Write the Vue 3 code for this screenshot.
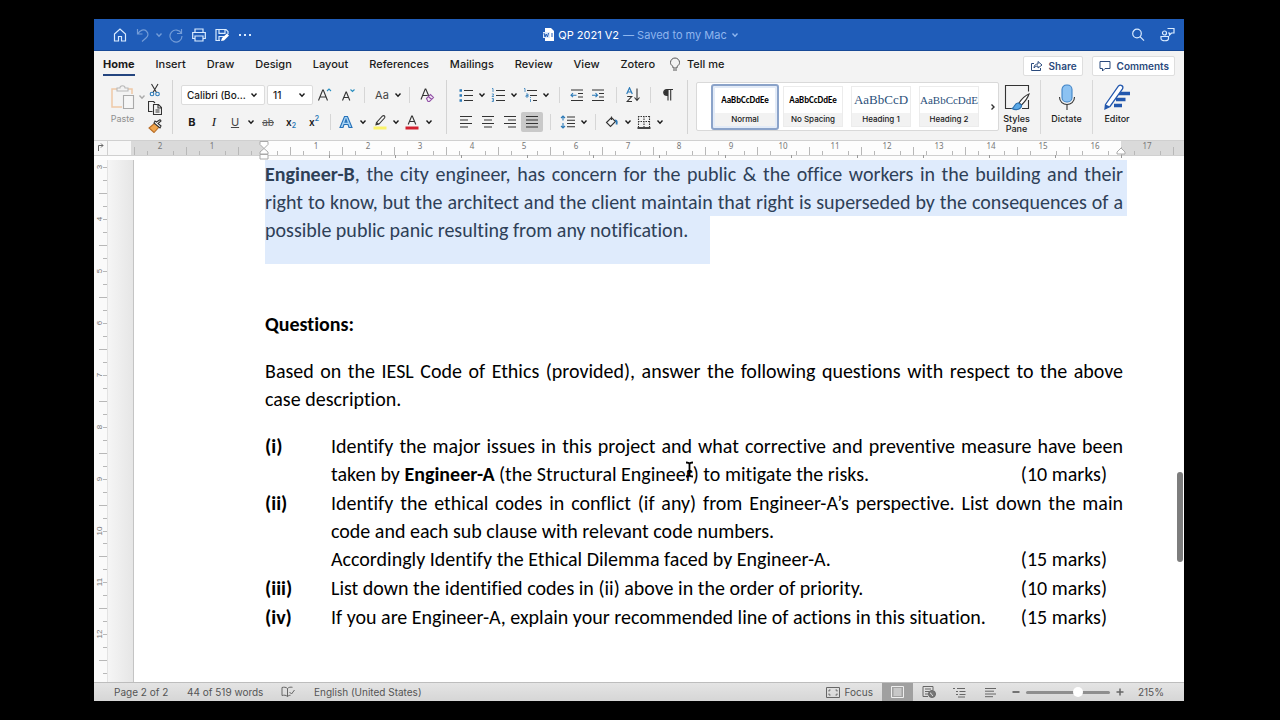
<script setup>
import { ref } from 'vue'

const tabs = ['Home', 'Insert', 'Draw', 'Design', 'Layout', 'References', 'Mailings', 'Review', 'View', 'Zotero']
const fontName = ref('Calibri (Bo...')
const fontSize = ref('11')
const zoom = ref(63)
const styleCards = [
  { name: 'Normal', sample: 'AaBbCcDdEe', kind: 'body', on: true },
  { name: 'No Spacing', sample: 'AaBbCcDdEe', kind: 'body' },
  { name: 'Heading 1', sample: 'AaBbCcD', kind: 'h1' },
  { name: 'Heading 2', sample: 'AaBbCcDdE', kind: 'h2' },
]

/* Ruler geometry: one unit is about 52px, subdivided in quarters. */
const unit = 51.93
const hTicks = []
const hNumbers = []
for (let q = -10; q <= 70; q++) {
  const x = Math.round(170 + (q * unit) / 4)
  if (q % 4 === 0) {
    if (q !== 0 && q / 4 <= 17) hNumbers.push({ x, n: Math.abs(q / 4) })
  } else hTicks.push({ x, top: q % 2 === 0 ? 6 : 10 })
}
const tabStops = Array.from({ length: 13 }, (_, i) => 235 + i * 66)
const vTicks = []
const vNumbers = []
for (let q = 0; q <= 39; q++) {
  const y = Math.round(7 + (q * unit) / 4)
  if (q % 4 === 0) vNumbers.push({ y, n: 3 + q / 4 })
  vTicks.push({ y, left: q % 4 === 2 ? 5 : 9 })
}
</script>

<template>
  <div class="stage">
    <svg class="defs" aria-hidden="true">
      <symbol id="chev" viewBox="0 0 8 8"><path d="M1.5 2.5 4 5.2 6.5 2.5" fill="none" stroke="currentColor" stroke-width="1.4" /></symbol>
    </svg>
    <main class="window">
      <header class="titlebar">
        <div class="quick">
          <button aria-label="Home"><svg width="16" height="16" viewBox="0 0 16 16"><path d="M2.5 7 8 2l5.500 5v7h-4V9.500h-3V14h-4z" /></svg></button>
          <button aria-label="Undo" class="dim wide"><svg width="16" height="16" viewBox="0 0 16 16"><path d="M2.500 2v5h5M2.800 6.800C5 3 9 1.800 11.500 4.200s1.500 5-.5 6.800L7 14.500" /></svg></button>
          <button aria-label="Undo history" class="dim slim"><svg width="8" height="8"><use href="#chev" /></svg></button>
          <button aria-label="Redo" class="dim"><svg width="16" height="16" viewBox="0 0 16 16"><path d="M13.500 2v4.500H9M13.300 6.200A6 6 0 1 0 14 9" /></svg></button>
          <button aria-label="Print"><svg width="16" height="16" viewBox="0 0 16 16"><path d="M4 5V2h8v3M4 11.500H1.700V5.500h12.600v6H12M4 9h8v5H4z" /></svg></button>
          <button aria-label="Save"><svg width="16" height="16" viewBox="0 0 16 16"><path d="M6 13.500H2v-11h10l2 2V7M5 2.500v3.800h6V2.500M5 13.500V9.500h5" /><path d="m7 14 1-3 5-4.500 2 2-5 5z" fill="#fff" stroke="none" /></svg></button>
          <button aria-label="More"><svg width="16" height="16" viewBox="0 0 16 16"><path d="M2 8h2m3 0h2m3 0h2" stroke-width="1.800" /></svg></button>
        </div>
        <div class="doc-name">
          <svg width="11" height="13" viewBox="0 0 11 13"><path d="M2 0h6l3 3v10H2z" fill="#fff" /><path d="M0 4h7v6H0z" fill="#dbe9fb" /><path d="m1 5 1 4 1.200-3L4.500 9l1-4M8 6h2M8 8h2" fill="none" stroke="#1f5cb8" /></svg>
          <span>QP 2021 V2</span><span class="saved">— Saved to my Mac</span>
          <svg width="8" height="8" class="saved"><use href="#chev" /></svg>
        </div>
        <div class="tools">
          <button aria-label="Search"><svg width="16" height="16" viewBox="0 0 16 16"><circle cx="7" cy="6.500" r="4.300" /><path d="m10 9.700 4 4" /></svg></button>
          <button aria-label="Presence"><svg width="16" height="16" viewBox="0 0 16 16"><circle cx="5.500" cy="6" r="2" /><path d="M2 9.500h7.500v2c0 3-7.500 3-7.500 0zM8.500 1.500H15v4.500h-2.500l-2 2V6H9" /></svg></button>
        </div>
      </header>

      <nav class="tabs">
        <a v-for="(t, i) in tabs" :key="t" href="#" :class="{ current: i === 0 }">{{ t }}</a>
        <a href="#" class="tell"><svg width="12" height="15" viewBox="0 0 12 15"><path d="M4 11V9.500C2 8 1.500 7 1.500 5.500a4.500 4.500 0 0 1 9 0C10.500 7 10 8 8 9.500V11zM4 13h4" fill="none" stroke="#555" /></svg>Tell me</a>
        <span class="grow"></span>
        <button class="action"><svg width="13" height="12" viewBox="0 0 13 12"><path d="M4 3.500H1.500v7h9V8M4 8c0-3 2-4 4-4V1.500L12 5 8 8V6C6.500 6 5 6.500 4 8z" fill="none" stroke="#2b4a7c" /></svg>Share</button>
        <button class="action"><svg width="12" height="12" viewBox="0 0 12 12"><path d="M1 1.500h10v7H6L3.500 11V8.500H1z" fill="none" stroke="#2b4a7c" /></svg>Comments</button>
      </nav>

      <section class="ribbon" aria-label="Home tools">
        <div class="group clip">
          <button class="paste" disabled>
            <svg width="26" height="27" viewBox="0 0 26 27"><path d="M12 23H2V5h20v5" fill="none" stroke="#efc9a6" stroke-width="1.500" /><path d="M7 7V4h3c0-3 5-3 5 0h3v3z" fill="#f3f3f3" stroke="#b9b9b9" /><path d="M13.500 11.500h10v13h-10z" fill="#f6f6f6" stroke="#aaa" /></svg>
            <span>Paste</span>
          </button>
          <svg class="paste-chev" width="8" height="8"><use href="#chev" /></svg>
          <div class="stack">
            <button aria-label="Cut"><svg width="14" height="14" viewBox="0 0 14 14"><path d="m3.500 1 5 8.500M10 1 5 9.500" fill="none" stroke="#333" /><circle cx="4" cy="11" r="1.800" fill="none" stroke="#2c7ab8" /><circle cx="9.500" cy="11" r="1.800" fill="none" stroke="#2c7ab8" /></svg></button>
            <button aria-label="Copy"><svg width="14" height="14" viewBox="0 0 14 14"><path d="M4.500 10.500h-4V.5h5l1.500 1.500M5.500 3.500h5l3 3v7h-8zM10 3.500V7h3.500M7.500 9h4m-4 2h4" fill="none" stroke="#333" /></svg></button>
            <button aria-label="Format Painter"><svg width="14" height="14" viewBox="0 0 14 14"><path d="m7 4 4 4-5 5.500L1 9z" fill="#f1a64d" stroke="#b86d27" /><path d="m6 4 6 5 1-2-3-2.500L13 2l-1-1.300L8.500 3 7 2z" fill="#fff" stroke="#333" /></svg></button>
          </div>
        </div>

        <div class="group font">
          <div class="row">
            <label class="pick name"><select v-model="fontName" aria-label="Font"><option>Calibri (Bo...</option></select><svg width="8" height="8"><use href="#chev" /></svg></label>
            <label class="pick size"><select v-model="fontSize" aria-label="Font size"><option>11</option></select><svg width="8" height="8"><use href="#chev" /></svg></label>
            <button class="w22" aria-label="Grow font"><svg width="16" height="16" viewBox="0 0 16 16"><path d="M2.500 13.500 6.700 3h.6l4.200 10.500M4 10h6" /><path d="m11 4 2-2 2 2" stroke="#2c8fc0" /></svg></button>
            <button class="w24" aria-label="Shrink font"><svg width="16" height="16" viewBox="0 0 16 16"><path d="M3.500 13.500 7 5h.4l3.400 8.500M4.800 10.500h4.700" /><path d="m11.500 2.500 2 2 2-2" stroke="#2c8fc0" /></svg></button>
            <i class="sep w10"></i>
            <button class="w24 aa">Aa</button><button class="w10" aria-label="Change case"><svg width="8" height="8"><use href="#chev" /></svg></button>
            <i class="sep w12"></i>
            <button class="w24" aria-label="Clear formatting"><svg width="16" height="16" viewBox="0 0 16 16"><path d="M2 12.500 6.200 2h.6L10 9.500M3.700 8.500h5" /><path d="m7.500 11.500 4-4 3 3-4 4h-1.500zM9.500 9.500l3 3" stroke="#9454a8" fill="#f3eaf6" /></svg></button>
          </div>
          <div class="row">
            <button class="w22 b">B</button><button class="w22 it">I</button><button class="w20 un">U</button>
            <button class="w12" aria-label="Underline styles"><svg width="8" height="8"><use href="#chev" /></svg></button>
            <button class="w22 st">ab</button><button class="w24 xs">x<sub>2</sub></button><button class="w22 xs">x<sup>2</sup></button>
            <i class="sep w10"></i>
            <button class="w22" aria-label="Text effects"><svg width="16" height="16" viewBox="0 0 16 16"><path d="M2 13.500 6.500 2.500h3l4.500 11h-3L10 10.500H6l-1 3z" stroke="#2470b8" fill="#a8d4f5" /><path d="M7 8.300 8 5.500l1 2.800z" stroke="#2470b8" fill="#fff" /></svg></button>
            <button class="w12" aria-label="Effects list"><svg width="8" height="8"><use href="#chev" /></svg></button>
            <button class="w22" aria-label="Highlight"><svg width="16" height="16" viewBox="0 0 16 16"><path d="M1.500 12.500h13v3h-13z" fill="#fbf36a" stroke="none" /><path d="m4.500 8.500 6-6.500c2-1 3 .5 2 2l-5.500 6-3 .8zM4.500 8.500 7 10.500" /></svg></button>
            <button class="w10" aria-label="Highlight colours"><svg width="8" height="8"><use href="#chev" /></svg></button>
            <button class="w22" aria-label="Font colour"><svg width="16" height="16" viewBox="0 0 16 16"><path d="M4.200 10.500 7.700 2h.6l3.500 8.500M5.500 7.500h5" /><path d="M1.500 12.500h13v3h-13z" fill="#d3202f" stroke="none" /></svg></button>
            <button class="w12" aria-label="Font colours"><svg width="8" height="8"><use href="#chev" /></svg></button>
          </div>
        </div>

        <div class="group para">
          <div class="row">
            <button class="w22" aria-label="Bullets"><svg width="14" height="14" viewBox="0 0 14 14"><path d="M5 2.500h9m-9 5h9m-9 5h9" /><path d="M.5 2.500h2.500m-2.500 5h2.500m-2.500 5h2.500" stroke="#2c7ab8" stroke-width="2.500" /></svg></button>
            <button class="w10" aria-label="Bullet list"><svg width="8" height="8"><use href="#chev" /></svg></button>
            <button class="w22" aria-label="Numbering"><svg width="14" height="14" viewBox="0 0 14 14"><path d="M5 2.500h9m-9 5h9m-9 5h9" /><path d="M1 .5h1V4M.8 6H2.500v1L1 8.500h2M.8 10.500h1.700v3H.8M1.200 12h1" stroke="#2c7ab8" stroke-width=".8" /></svg></button>
            <button class="w10" aria-label="Number list"><svg width="8" height="8"><use href="#chev" /></svg></button>
            <button class="w22" aria-label="Multilevel list"><svg width="14" height="14" viewBox="0 0 14 14"><path d="M4 2.500h10m-7 5h7m-4 5h4" /><path d="M1 .5h1V4M3 6h2v3H3V7.500h2M7.500 11v3m0-5v1" stroke="#2c7ab8" stroke-width=".8" /></svg></button>
            <button class="w10" aria-label="Levels"><svg width="8" height="8"><use href="#chev" /></svg></button>
            <i class="sep w16"></i>
            <button class="w20" aria-label="Decrease indent"><svg width="14" height="14" viewBox="0 0 14 14"><path d="M1 2h12M8 5.500h5M8 9h5M1 12.500h12" /><path d="M6.500 7.200H1m2-2-2 2 2 2" stroke="#2c7ab8" /></svg></button>
            <button class="w22" aria-label="Increase indent"><svg width="14" height="14" viewBox="0 0 14 14"><path d="M1 2h12M8 5.500h5M8 9h5M1 12.500h12" /><path d="M1 7.200h5.500m-2-2 2 2-2 2" stroke="#2c7ab8" /></svg></button>
            <i class="sep w14"></i>
            <button class="w20" aria-label="Sort"><svg width="14" height="16" viewBox="0 0 14 16"><path d="M.7 7 3.500.8 6.300 7M1.700 5h3.600" stroke="#2c7ab8" stroke-width="1.200" /><path d="M1.200 9.500h4.500l-4.500 5h4.800M11 1.500v12m-2.500-3 2.500 3 2.500-3" /></svg></button>
            <i class="sep w14"></i>
            <button class="w22" aria-label="Show marks"><svg width="12" height="14" viewBox="0 0 12 14"><path d="M5.500 7.500C.5 7.500.5 1.500 5 1.500h6M6 1.500V12.500M8.700 1.500V12.500" /><path d="M5.500 7C1.500 7 1.500 2 5.500 2z" fill="#333" /></svg></button>
          </div>
          <div class="row">
            <button class="w22" aria-label="Align left"><svg width="14" height="14" viewBox="0 0 14 14"><path d="M1 1.500h12M1 5h8M1 8.500h12M1 12h8" /></svg></button>
            <button class="w22" aria-label="Centre"><svg width="14" height="14" viewBox="0 0 14 14"><path d="M1 1.500h12M3 5h8M1 8.500h12M3 12h8" /></svg></button>
            <button class="w22" aria-label="Align right"><svg width="14" height="14" viewBox="0 0 14 14"><path d="M1 1.500h12M5 5h8M1 8.500h12M5 12h8" /></svg></button>
            <button class="w22 pressed" aria-label="Justify"><svg width="14" height="14" viewBox="0 0 14 14"><path d="M1 1.500h12M1 5h12M1 8.500h12M1 12h12" /></svg></button>
            <i class="sep w14"></i>
            <button class="w22" aria-label="Line spacing"><svg width="16" height="14" viewBox="0 0 16 14"><path d="M7 2h8M7 5.200h8M7 8.500h8M7 11.800h8" /><path d="M3 1v4.500M1 3l2-2 2 2M3 8v5M1 11l2 2 2-2" stroke="#2c7ab8" /></svg></button>
            <button class="w10" aria-label="Spacing options"><svg width="8" height="8"><use href="#chev" /></svg></button>
            <i class="sep w12"></i>
            <button class="w22" aria-label="Shading"><svg width="14" height="14" viewBox="0 0 14 14"><path d="m1.500 7.500 5-5 4 4-5 5zM6.500 5V1.500" /><path d="M10 5.500c2-.5 2 2 1.500 4" stroke="#2c7ab8" stroke-width="1.800" /></svg></button>
            <button class="w10" aria-label="Shading colours"><svg width="8" height="8"><use href="#chev" /></svg></button>
            <button class="w22" aria-label="Borders"><svg width="14" height="14" viewBox="0 0 14 14"><path d="M1 1.500h12M1.500 1v11M7 1v11M12.500 1v11M1 6.500h12" stroke-dasharray="1.500 1" /><path d="M.5 13h13" stroke-width="1.800" /></svg></button>
            <button class="w10" aria-label="Border options"><svg width="8" height="8"><use href="#chev" /></svg></button>
          </div>
        </div>

        <div class="gallery">
          <button v-for="s in styleCards" :key="s.name" class="card" :class="{ on: s.on }">
            <span class="sample" :class="s.kind">{{ s.sample }}</span><span class="caption">{{ s.name }}</span>
          </button>
          <button class="more" aria-label="More styles"><svg width="6" height="8" viewBox="0 0 6 8"><path d="m1.500 1.500 2.500 2.500-2.500 2.500" stroke-width="1.400" /></svg></button>
        </div>
        <button class="big pane"><svg width="28" height="28" viewBox="0 0 28 28"><path d="M12 25.500H2.500v-23h23v6M25.500 17v8.500H19" /><path d="M26 11c-5 2-8 6-10 9l2.500 2c3-3 6-6 7.500-11z" fill="#fff" /><path d="M15.500 20c-4-.5-3.500 4-6.500 5.500 4 2.500 10 .5 9.500-3.500z" fill="#5aa8e6" stroke="#2c6fae" /></svg><span>Styles<br>Pane</span></button>
        <button class="big dictate"><svg width="28" height="28" viewBox="0 0 28 28"><rect x="9" y="2" width="10" height="17" rx="4.500" fill="#8cc2f2" stroke="#3f83c6" /><path d="M6.500 14c0 10 15 10 15 0M14 21.500V27" /></svg><span>Dictate</span></button>
        <button class="big editor"><svg width="28" height="28" viewBox="0 0 28 28"><path d="M16 10.500h11M13 16.500h9.500M11 22.500h8" stroke="#2257ad" stroke-width="3.600" /><path d="m2.500 21.500 13-18.500c2-2 5.500 0 4 3L7 23.500l-5 2.500z" fill="#fff" stroke="#2257ad" stroke-width="1.300" /><path d="m2.500 21.500 4.500 2-5 2.500z" fill="#2257ad" stroke="none" /></svg><span>Editor</span></button>
      </section>

      <div class="hruler">
        <svg width="100%" height="20">
          <rect x="0" y="0" width="37" height="14" fill="#f7f7f7" />
          <rect x="37" y="0" width="133" height="14" fill="#dadada" />
          <rect x="1027" y="0" width="2000" height="14" fill="#dadada" />
          <path d="M13.500 0v14M0 14.500h3000" stroke="#d0d0d0" fill="none" />
          <path d="M4.500 10V4.500H9M7 2.500l2 2-2 2" stroke="#666" fill="none" />
          <path v-for="t in hTicks" :key="t.x" :d="`M${t.x + 0.5} ${t.top}V14`" stroke="#b8b8b8" />
          <path v-for="x in tabStops" :key="x" :d="`M${x + 0.5} 14V17`" stroke="#999" />
          <text v-for="n in hNumbers" :key="n.x" :x="n.x" y="8" text-anchor="middle">{{ n.n }}</text>
          <path d="M166 .5h8v3l-4 4-4-4zM166 13v-2l4-3.500 4 3.500v2zM166 13.500h8v4.500h-8z" fill="#fff" stroke="#aaa" />
          <path d="M1023 13v-2l4-4 4 4v2z" fill="#fff" stroke="#aaa" />
        </svg>
      </div>

      <div class="workspace">
        <div class="vruler">
          <svg width="14" height="100%">
            <path v-for="t in vTicks" :key="t.y" :d="`M${t.left} ${t.y + 0.5}H13`" stroke="#b8b8b8" />
            <text v-for="n in vNumbers" :key="n.y" text-anchor="middle" :transform="`translate(8 ${n.y}) rotate(-90)`">{{ n.n }}</text>
          </svg>
        </div>
        <div class="gutter"></div>
        <article class="page">
          <div class="selected">
            <p class="full fill"><b>Engineer-B</b>, the city engineer, has concern for the public &amp; the office workers in the building and their</p>
            <p class="full fill">right to know, but the architect and the client maintain that right is superseded by the consequences of a</p>
            <p class="tail">possible public panic resulting from any notification.</p>
          </div>
          <h2>Questions:</h2>
          <div class="intro">
            <p class="fill">Based on the IESL Code of Ethics (provided), answer the following questions with respect to the above</p>
            <p>case description.</p>
          </div>
          <dl>
            <dt>(i)</dt>
            <dd>
              <p class="fill">Identify the major issues in this project and what corrective and preventive measure have been</p>
              <p class="marked"><span>taken by <b>Engineer-A</b> (the Structural Engineer<span class="caret"><svg width="9" height="17" viewBox="0 0 9 17"><path d="M1 1.500c2 0 3.500.5 3.500 2v10c0 1.500-1.500 2-3.500 2M8 1.500c-2 0-3.500.5-3.500 2M8 15.500c-2 0-3.500-.5-3.500-2M2.500 10h4" fill="none" stroke="#000" stroke-width="1.800" /></svg></span>) to mitigate the risks.</span><span>(10 marks)</span></p>
            </dd>
            <dt>(ii)</dt>
            <dd>
              <p class="fill">Identify the ethical codes in conflict (if any) from Engineer-A’s perspective. List down the main</p>
              <p>code and each sub clause with relevant code numbers.</p>
              <p class="marked"><span>Accordingly Identify the Ethical Dilemma faced by Engineer-A.</span><span>(15 marks)</span></p>
            </dd>
            <dt>(iii)</dt>
            <dd><p class="marked"><span>List down the identified codes in (ii) above in the order of priority.</span><span>(10 marks)</span></p></dd>
            <dt>(iv)</dt>
            <dd><p class="marked"><span>If you are Engineer-A, explain your recommended line of actions in this situation.</span><span>(15 marks)</span></p></dd>
          </dl>
          <div class="thumb"></div>
        </article>
      </div>

      <footer class="status">
        <span class="pages">Page 2 of 2</span><span class="words">44 of 519 words</span>
        <button aria-label="Proofing" class="proof"><svg width="14" height="12" viewBox="0 0 14 12"><path d="M6.500 2.500C5 1 3 1 1 1.500v8c2-.5 4-.5 5.500 1V2.500C8 1 9.500 1 11.500 1.300M6.500 10.500c1-1 2-1.200 3-1.200M8.500 6l2 2 3-4" /></svg></button>
        <span>English (United States)</span>
        <span class="grow"></span>
        <button class="focus"><svg width="14" height="11" viewBox="0 0 14 11"><path d="M.5.5h13v10H.5z" /><path d="M3 4.500V3h1.500M9.500 3H11v1.500M11 6.500V8H9.500M4.500 8H3V6.500" /></svg>Focus</button>
        <button class="view active" aria-label="Print layout"><svg width="13" height="12" viewBox="0 0 13 12"><path d="M.5.5h12v11H.5z" stroke="#eee" /><path d="M2.500 3h8m-8 2h8m-8 2h8m-8 2h8" stroke="#eee" /></svg></button>
        <button class="view" aria-label="Web layout"><svg width="14" height="12" viewBox="0 0 14 12"><path d="M6 10.500H1V.5h10V4M3 3h6M3 5.500h4M3 8h3" /><circle cx="10" cy="8" r="3.500" fill="#777" /><path d="M8 7c2 0 1 2 3 3" stroke="#ddd" /></svg></button>
        <button class="view" aria-label="Outline"><svg width="13" height="11" viewBox="0 0 13 11"><path d="M0 1.500h2M4 1.500h8M3 4.500h2m1.500 0h6M3 7.500h2m1.500 0h6M5 10h7" /></svg></button>
        <button class="view" aria-label="Draft"><svg width="13" height="11" viewBox="0 0 13 11"><path d="M1 1.500h11M1 4.200h9M1 7h11M1 9.700h8" /></svg></button>
        <button class="step" aria-label="Zoom out"><svg width="8" height="8" viewBox="0 0 8 8"><path d="M.5 4h7" stroke-width="1.800" /></svg></button>
        <input v-model="zoom" type="range" min="0" max="100" aria-label="Zoom">
        <button class="step" aria-label="Zoom in"><svg width="8" height="8" viewBox="0 0 8 8"><path d="M.5 4h7M4 .5v7" stroke-width="1.500" /></svg></button>
        <span class="percent">215%</span>
      </footer>
    </main>
  </div>
</template>

<style>
body { background: #000; }
</style>

<style scoped>
.stage { box-sizing: border-box; min-height: 100vh; padding: 19px 96px 19px 94px; background: #000; display: flex; font: 11px/14px Inter, "Liberation Sans", sans-serif; color: #1a1a1a; }
.stage *, .stage *::before { box-sizing: border-box; }
.defs { position: absolute; width: 0; height: 0; }
.window { flex: 1; min-width: 0; display: flex; flex-direction: column; background: #f3f3f3; overflow: hidden; }
button { appearance: none; border: 0; background: none; padding: 0; margin: 0; font: inherit; color: inherit; display: flex; align-items: center; justify-content: center; flex: none; }
svg { flex: none; display: block; }
p, h2, dl, dd { margin: 0; }
.grow { flex: 1; }

.titlebar { height: 32px; background: #1f5cb8; border-bottom: 1px solid #184a97; display: grid; grid-template-columns: 1fr auto 1fr; align-items: center; color: #fff; }
.titlebar button svg { fill: none; stroke: #d9ebff; stroke-width: 1.2; }
.quick { display: flex; padding-left: 14px; }
.quick button { width: 23px; }
.quick .slim { width: 10px; }
.quick .dim { opacity: .45; color: #d9ebff; }
.doc-name { display: flex; align-items: center; gap: 4px; padding-left: 4px; }
.saved { color: #8fb6ee; }
.tools { display: flex; justify-content: flex-end; gap: 13px; padding-right: 9px; }

.tabs { height: 26px; display: flex; align-items: center; gap: 21px; padding: 0 9px; font-weight: 500; }
.tabs a { color: #1a1a1a; text-decoration: none; height: 23px; padding-top: 4px; white-space: nowrap; }
.tabs .current { font-weight: 700; border-bottom: 2px solid #24457f; }
.tabs .tell { display: flex; gap: 6px; margin-left: -7px; }
.tabs .action { height: 20px; margin-top: 3px; padding: 0 5px 0 6px; gap: 6px; background: #fff; border: 1px solid #dedede; border-radius: 2px; color: #2b4a7c; font-size: 10px; font-weight: 600; }
.action + .action { margin-left: -12px; }

.ribbon { height: 63px; display: flex; align-items: flex-start; padding-top: 3px; }
.ribbon button svg { fill: none; stroke: #333; stroke-width: 1.1; }
.group { height: 54px; border-right: 1px solid #d3d3d3; flex: none; }
.clip { width: 79px; display: flex; padding-left: 13px; }
.paste { flex-direction: column; justify-content: flex-start; width: 31px; padding-top: 4px; gap: 1px; color: #8f8f8f; font-size: 9px; }
.paste-chev { margin-top: 13px; margin-right: 2px; color: #aaa; }
.stack { display: flex; flex-direction: column; gap: 4px; padding-top: 3px; }
.row { display: flex; align-items: center; height: 27px; padding-top: 3px; }
.font { width: 274px; padding-left: 8px; }
.para { width: 241px; padding-left: 8px; }
.w10 { width: 10px; } .w12 { width: 12px; } .w14 { width: 14px; } .w16 { width: 16px; } .w20 { width: 20px; } .w22 { width: 22px; } .w24 { width: 24px; }
.sep { height: 16px; display: flex; justify-content: center; flex: none; }
.sep::before { content: ""; width: 1px; background: #d6d6d6; }
.pick { display: grid; grid-template-columns: 1fr 14px; align-items: center; height: 20px; background: #fff; border: 1px solid #dcdcdc; border-radius: 2px; margin-right: 2px; }
.pick select { grid-area: 1 / 1 / 2 / 3; appearance: none; border: 0; background: none; font: inherit; font-size: 10px; font-weight: 500; color: #1a1a1a; padding: 0 0 0 5px; width: 100%; }
.pick svg { grid-area: 1 / 2 / 2 / 3; }
.pick.name { width: 84px; }
.pick.size { width: 46px; margin-right: 0; }
.aa { color: #444; padding-left: 2px; }
.b { font-weight: 700; }
.it { font: italic 13px "Liberation Serif", serif; }
.un { text-decoration: underline; color: #444; }
.st { text-decoration: line-through; color: #555; font-size: 10px; }
.xs { font-weight: 600; font-size: 10px; }
.xs sub, .xs sup { font-size: 7px; line-height: 7px; color: #2c7ab8; }
.xs sub { align-self: flex-end; }
.xs sup { align-self: flex-start; }
.pressed { height: 20px; background: #c9c9c9; border-radius: 2px; }

.gallery { display: flex; align-items: center; height: 49px; margin: 2px 0 0 8px; padding-left: 14px; border: 1px solid #d9d9d9; border-radius: 2px; background: #fff; width: 303px; flex: none; }
.card { width: 60px; height: 41px; flex-direction: column; justify-content: flex-end; border: 1px solid #ececec; margin-right: 8px; }
.card.on { width: 68px; height: 46px; margin-right: 4px; border: 2px solid #8ba3c9; border-radius: 3px; background: #e3ebf7; padding: 2px; }
.sample { flex: 1; align-self: stretch; display: flex; align-items: center; justify-content: center; background: #fff; }
.body { font: 700 9px/12px Carlito, Lato, sans-serif; color: #000; }
.h1 { font: 13px/16px "Liberation Serif", serif; color: #2b4f7a; }
.h2 { font: 11px/16px "Liberation Serif", serif; color: #2b4f7a; }
.caption { align-self: stretch; height: 13px; background: #f2f2f2; font-size: 8px; line-height: 13px; font-weight: 500; }
.more { flex: 1; }
.big { flex-direction: column; justify-content: flex-start; width: 52px; height: 54px; font-size: 9px; font-weight: 500; line-height: 10px; padding-top: 3px; gap: 3px; border-right: 1px solid #d8d8d8; }
.pane { width: 42px; padding-right: 6px; }
.editor { border: 0; width: 48px; }

.hruler { height: 20px; background: #fdfdfd; border-top: 1px solid #d0d0d0; }
.hruler text { font: 8px "Noto Sans", sans-serif; fill: #777; }
.vruler text { font: 8px "Liberation Sans", sans-serif; fill: #777; }

.workspace { flex: 1; min-height: 522px; display: flex; background: #fff; }
.vruler { width: 14px; background: #fafafa; border-right: 1px solid #e3e3e3; }
.vruler svg { height: 522px; }
.gutter { width: 26px; background: linear-gradient(90deg, #f5f5f5, #e6e6e6); border-right: 1px solid #c4c4c4; }
.page { position: relative; flex: 1; min-width: 0; padding: 0 61px 40px 131px; font: 20px/28px Carlito, Lato, sans-serif; font-variant-ligatures: none; color: #000; }
.page p { white-space: nowrap; }
.page .fill { text-align-last: justify; }
.selected { color: #2e4057; height: 104px; margin-right: -4px; }
.selected p { background: #dfebfc; }
.selected .full { padding-right: 4px; }
.selected .tail { width: 445px; height: 48px; }
.page h2 { margin-top: 46px; font-size: 20px; line-height: 28px; font-weight: 700; }
.intro { margin-top: 19px; }
dl { margin-top: 19px; display: grid; grid-template-columns: 66px 1fr; row-gap: 1px; }
dt { font-weight: 700; }
.marked { display: flex; justify-content: space-between; padding-right: 16px; }
.caret { position: relative; }
.caret svg { position: absolute; right: -1px; top: -1px; }
.thumb { position: absolute; right: 1px; top: 312px; width: 6px; height: 90px; border-radius: 3px; background: #7d7d7d; }

.status { height: 19px; display: flex; align-items: center; background: linear-gradient(#e4e4e4, #d6d6d6); border-top: 1px solid #bdbdbd; padding: 0 20px; font-size: 10px; color: #555; }
.status svg { fill: none; stroke: #666; }
.pages { width: 73px; }
.words { width: 93px; }
.proof { width: 16px; margin-right: 18px; }
.focus { gap: 5px; margin-right: 9px; }
.view { width: 31px; height: 18px; }
.view.active { background: #a0a0a0; }
.step { width: 20px; }
input[type="range"] { appearance: none; width: 84px; height: 12px; margin: 0; background: none; }
input[type="range"]::-webkit-slider-runnable-track { height: 3px; background: #8e8e8e; border-radius: 2px; }
input[type="range"]::-webkit-slider-thumb { appearance: none; width: 10px; height: 10px; margin-top: -4px; border-radius: 50%; background: #fff; }
.percent { width: 34px; text-align: right; }
</style>
